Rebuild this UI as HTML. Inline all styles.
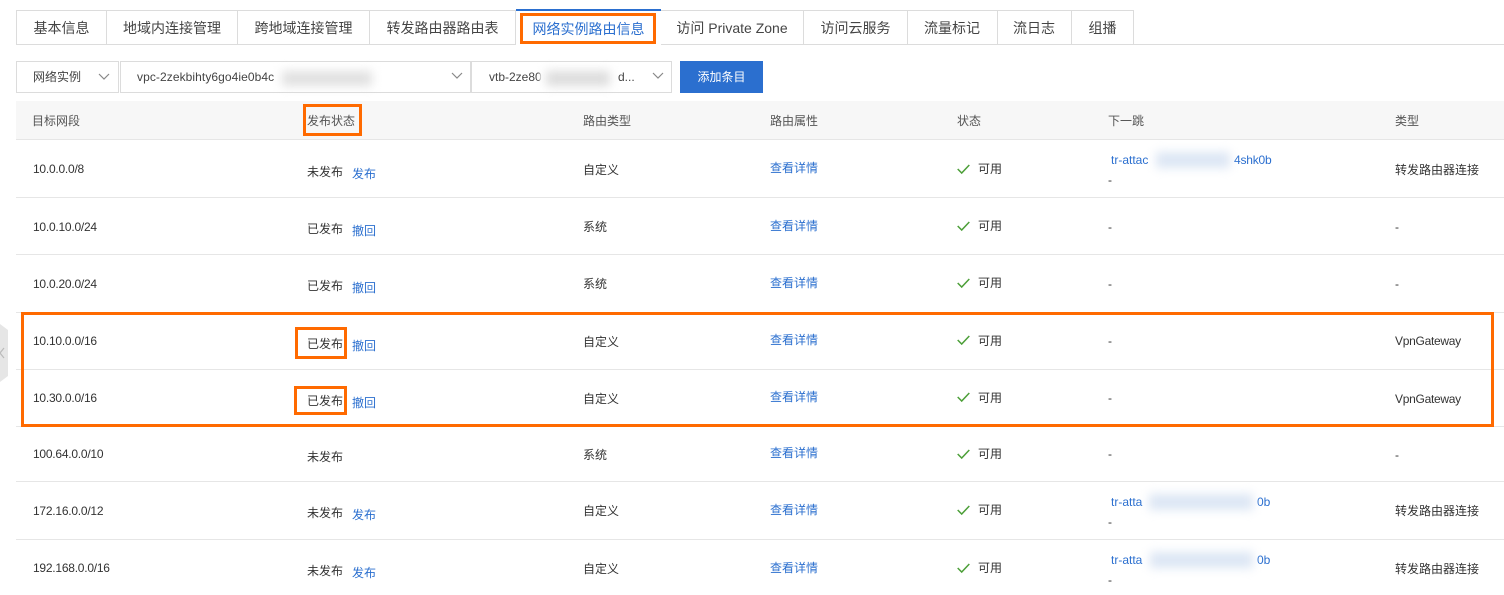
<!DOCTYPE html>
<html lang="zh-CN">
<head>
<meta charset="utf-8">
<title>网络实例路由信息</title>
<style>
html,body{margin:0;padding:0;background:#fff}
body{width:1504px;height:595px;overflow:hidden;position:relative;font-family:"Liberation Sans","Noto Sans CJK SC",sans-serif;font-size:12px;color:#333}
.a{position:absolute}
.t{position:absolute;line-height:20px;height:20px;white-space:nowrap;margin-top:-10px}
.n{letter-spacing:-.24px}
.l{color:#2b6fcf}
.h{color:#555}
.tab{position:absolute;top:10px;height:33px;line-height:34px;border:1px solid #dcdcdc;border-left:0;box-sizing:content-box;font-size:14px;color:#444;text-align:center;background:#fff;white-space:nowrap}
.line{position:absolute;left:16px;width:1488px;height:1px;background:#e6e6e6}
.box{position:absolute;border:3px solid #ff6a00;box-sizing:border-box}
.sel{position:absolute;top:61px;height:32px;border:1px solid #dcdcdc;box-sizing:border-box;background:#fff;line-height:30px;white-space:nowrap;color:#444}
.blur{position:absolute;filter:blur(5px)}
.mask{position:absolute;background:#fff;filter:blur(1px)}
svg{position:absolute;overflow:visible}
</style>
</head>
<body>
<!-- tabs -->
<div class="a" style="left:16px;top:44px;width:1488px;height:1px;background:#dcdcdc"></div>
<div class="tab" style="left:16px;width:89px;border-left:1px solid #dcdcdc">基本信息</div>
<div class="tab" style="left:107px;width:130px">地域内连接管理</div>
<div class="tab" style="left:238px;width:131px">跨地域连接管理</div>
<div class="tab" style="left:370px;width:145px">转发路由器路由表</div>
<div class="tab l" style="left:516px;width:145px;top:9px;height:36px;line-height:37px;border:0;border-top:2px solid #2b6fcf;box-sizing:border-box;color:#2b6fcf">网络实例路由信息</div>
<div class="tab" style="left:661px;width:142px">访问 Private Zone</div>
<div class="tab" style="left:804px;width:103px">访问云服务</div>
<div class="tab" style="left:908px;width:89px;text-indent:-1px">流量标记</div>
<div class="tab" style="left:998px;width:73px;text-indent:-1px">流日志</div>
<div class="tab" style="left:1072px;width:61px">组播</div>

<!-- selects -->
<div class="sel" style="left:16px;width:103px;padding-left:16px">网络实例</div>
<svg style="left:98px;top:73px" width="12" height="7"><path d="M1 1L6 6L11 1" fill="none" stroke="#888" stroke-width="1.2"/></svg>
<div class="sel" style="left:120px;width:351px;padding-left:16px"><span style="letter-spacing:.08px">vpc-2zekbihty6go4ie0b4c</span></div>
<svg style="left:451px;top:72px" width="12" height="7"><path d="M1 1L6 6L11 1" fill="none" stroke="#888" stroke-width="1.2"/></svg>
<div class="mask" style="left:275px;top:67px;width:103px;height:23px"></div>
<div class="blur" style="left:282px;top:71px;width:90px;height:15px;background:#e0e0e0"></div>
<div class="sel" style="left:471px;width:201px;padding-left:17px">vtb-2ze80</div>
<div class="t" style="left:618px;top:77px;color:#444">d...</div>
<svg style="left:652px;top:72px" width="12" height="7"><path d="M1 1L6 6L11 1" fill="none" stroke="#888" stroke-width="1.2"/></svg>
<div class="mask" style="left:540px;top:67px;width:76px;height:23px"></div>
<div class="blur" style="left:546px;top:71px;width:64px;height:15px;background:#dcdcdc"></div>
<div class="a" style="left:680px;top:61px;width:83px;height:32px;background:#2b6fcf;color:#fff;line-height:32px;text-align:center">添加条目</div>

<!-- table header -->
<div class="a" style="left:16px;top:101px;width:1488px;height:38px;background:#f7f7f7"></div>
<div class="line" style="top:139px"></div>
<div class="line" style="top:197px"></div>
<div class="line" style="top:254px"></div>
<div class="line" style="top:312px"></div>
<div class="line" style="top:369px"></div>
<div class="line" style="top:426px"></div>
<div class="line" style="top:481px"></div>
<div class="line" style="top:539px"></div>

<div class="t h" style="left:32px;top:121px">目标网段</div>
<div class="t h" style="left:307px;top:121px">发布状态</div>
<div class="t h" style="left:583px;top:121px">路由类型</div>
<div class="t h" style="left:770px;top:121px">路由属性</div>
<div class="t h" style="left:957px;top:121px">状态</div>
<div class="t h" style="left:1108px;top:121px">下一跳</div>
<div class="t h" style="left:1395px;top:121px">类型</div>

<!-- col 1 -->
<div class="t n" style="left:33px;top:169px">10.0.0.0/8</div>
<div class="t n" style="left:33px;top:227px">10.0.10.0/24</div>
<div class="t n" style="left:33px;top:284px">10.0.20.0/24</div>
<div class="t n" style="left:33px;top:341px">10.10.0.0/16</div>
<div class="t n" style="left:33px;top:398px">10.30.0.0/16</div>
<div class="t n" style="left:33px;top:454px">100.64.0.0/10</div>
<div class="t n" style="left:33px;top:511px">172.16.0.0/12</div>
<div class="t n" style="left:33px;top:568px">192.168.0.0/16</div>

<!-- col 2 -->
<div class="t" style="left:307px;top:172px">未发布</div><div class="t l" style="left:352px;top:174px">发布</div>
<div class="t" style="left:307px;top:229px">已发布</div><div class="t l" style="left:352px;top:231px">撤回</div>
<div class="t" style="left:307px;top:286px">已发布</div><div class="t l" style="left:352px;top:288px">撤回</div>
<div class="t" style="left:307px;top:344px">已发布</div><div class="t l" style="left:352px;top:346px">撤回</div>
<div class="t" style="left:307px;top:401px">已发布</div><div class="t l" style="left:352px;top:403px">撤回</div>
<div class="t" style="left:307px;top:457px">未发布</div>
<div class="t" style="left:307px;top:513px">未发布</div><div class="t l" style="left:352px;top:515px">发布</div>
<div class="t" style="left:307px;top:571px">未发布</div><div class="t l" style="left:352px;top:573px">发布</div>

<!-- col 3 -->
<div class="t" style="left:583px;top:170px">自定义</div>
<div class="t" style="left:583px;top:227px">系统</div>
<div class="t" style="left:583px;top:284px">系统</div>
<div class="t" style="left:583px;top:342px">自定义</div>
<div class="t" style="left:583px;top:399px">自定义</div>
<div class="t" style="left:583px;top:455px">系统</div>
<div class="t" style="left:583px;top:511px">自定义</div>
<div class="t" style="left:583px;top:569px">自定义</div>

<!-- col 4 -->
<div class="t l" style="left:770px;top:168px">查看详情</div>
<div class="t l" style="left:770px;top:226px">查看详情</div>
<div class="t l" style="left:770px;top:283px">查看详情</div>
<div class="t l" style="left:770px;top:340px">查看详情</div>
<div class="t l" style="left:770px;top:397px">查看详情</div>
<div class="t l" style="left:770px;top:453px">查看详情</div>
<div class="t l" style="left:770px;top:510px">查看详情</div>
<div class="t l" style="left:770px;top:568px">查看详情</div>

<!-- col 5 -->
<svg style="left:957px;top:164px" width="13" height="10"><path d="M.7 5L4.7 9L12.3 1" fill="none" stroke="#4c9f38" stroke-width="1.5"/></svg><div class="t" style="left:978px;top:169px">可用</div>
<svg style="left:957px;top:221px" width="13" height="10"><path d="M.7 5L4.7 9L12.3 1" fill="none" stroke="#4c9f38" stroke-width="1.5"/></svg><div class="t" style="left:978px;top:226px">可用</div>
<svg style="left:957px;top:278px" width="13" height="10"><path d="M.7 5L4.7 9L12.3 1" fill="none" stroke="#4c9f38" stroke-width="1.5"/></svg><div class="t" style="left:978px;top:283px">可用</div>
<svg style="left:957px;top:335px" width="13" height="10"><path d="M.7 5L4.7 9L12.3 1" fill="none" stroke="#4c9f38" stroke-width="1.5"/></svg><div class="t" style="left:978px;top:341px">可用</div>
<svg style="left:957px;top:392px" width="13" height="10"><path d="M.7 5L4.7 9L12.3 1" fill="none" stroke="#4c9f38" stroke-width="1.5"/></svg><div class="t" style="left:978px;top:398px">可用</div>
<svg style="left:957px;top:449px" width="13" height="10"><path d="M.7 5L4.7 9L12.3 1" fill="none" stroke="#4c9f38" stroke-width="1.5"/></svg><div class="t" style="left:978px;top:454px">可用</div>
<svg style="left:957px;top:505px" width="13" height="10"><path d="M.7 5L4.7 9L12.3 1" fill="none" stroke="#4c9f38" stroke-width="1.5"/></svg><div class="t" style="left:978px;top:510px">可用</div>
<svg style="left:957px;top:563px" width="13" height="10"><path d="M.7 5L4.7 9L12.3 1" fill="none" stroke="#4c9f38" stroke-width="1.5"/></svg><div class="t" style="left:978px;top:568px">可用</div>

<!-- col 6 -->
<div class="t l" style="left:1111px;top:160px">tr-attac</div><div class="t l" style="left:1234px;top:160px;letter-spacing:-.2px">4shk0b</div>
<div class="blur" style="left:1156px;top:152px;width:74px;height:16px;background:#dce6f4"></div>
<div class="t" style="left:1108px;top:180px">-</div>
<div class="t" style="left:1108px;top:227px">-</div>
<div class="t" style="left:1108px;top:284px">-</div>
<div class="t" style="left:1108px;top:341px">-</div>
<div class="t" style="left:1108px;top:398px">-</div>
<div class="t" style="left:1108px;top:454px">-</div>
<div class="t l" style="left:1111px;top:502px">tr-atta</div><div class="t l" style="left:1257px;top:502px">0b</div>
<div class="blur" style="left:1149px;top:494px;width:104px;height:16px;background:#dce6f4"></div>
<div class="t" style="left:1108px;top:522px">-</div>
<div class="t l" style="left:1111px;top:560px">tr-atta</div><div class="t l" style="left:1257px;top:560px">0b</div>
<div class="blur" style="left:1150px;top:552px;width:103px;height:16px;background:#dce6f4"></div>
<div class="t" style="left:1108px;top:580px">-</div>

<!-- col 7 -->
<div class="t" style="left:1395px;top:170px">转发路由器连接</div>
<div class="t" style="left:1395px;top:227px">-</div>
<div class="t" style="left:1395px;top:284px">-</div>
<div class="t" style="left:1395px;top:341px;letter-spacing:-.28px">VpnGateway</div>
<div class="t" style="left:1395px;top:399px;letter-spacing:-.28px">VpnGateway</div>
<div class="t" style="left:1395px;top:455px">-</div>
<div class="t" style="left:1395px;top:511px">转发路由器连接</div>
<div class="t" style="left:1395px;top:569px">转发路由器连接</div>

<!-- collapse handle -->
<div class="a" style="left:0;top:324px;width:8px;height:58px;background:#e6e6e6;clip-path:polygon(0 0,100% 6px,100% 52px,0 100%)"></div>
<svg style="left:0;top:347px" width="5" height="12"><path d="M4 1L0 6L4 11" fill="none" stroke="#bbb" stroke-width="1.2"/></svg>

<!-- annotations -->
<div class="box" style="left:520px;top:13px;width:136px;height:31px"></div>
<div class="box" style="left:303px;top:104px;width:59px;height:32px"></div>
<div class="box" style="left:21px;top:312px;width:1473px;height:115px"></div>
<div class="box" style="left:295px;top:327px;width:52px;height:32px"></div>
<div class="box" style="left:294px;top:386px;width:53px;height:29px"></div>
</body>
</html>
